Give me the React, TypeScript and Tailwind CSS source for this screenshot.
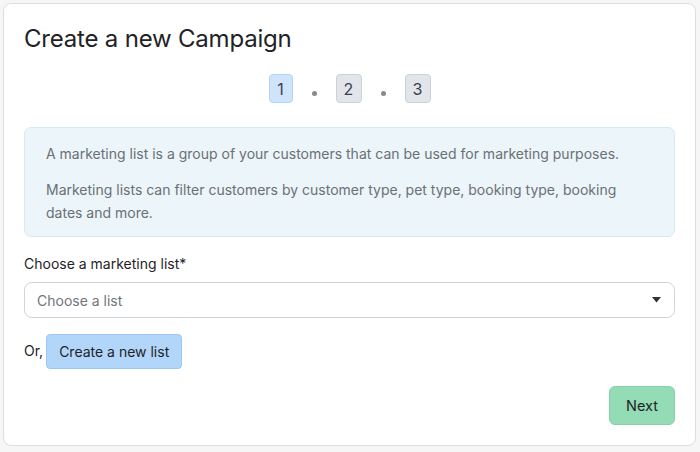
import React from "react";

export default function App() {
  return (
    <div
      className="min-h-[452px] w-[700px] bg-[#f6f6f6] p-[3px]"
      style={{ fontFamily: "Inter, 'Noto Sans', sans-serif" }}
    >
      <div className="flex h-[443px] w-[693px] flex-col rounded-[8px] border border-[#dedede] bg-white px-5 pt-[20px] pb-5">
        <h1 className="text-[24px] leading-[30px] font-normal text-[#1f2326] tracking-[-0.2px]">
          Create a new Campaign
        </h1>

        <div className="mt-[20px] flex items-center justify-center">
          <div className="flex h-[29px] w-[24px] items-center justify-center rounded-[4px] border border-[#b3d6f7] bg-[#cfe4fb] text-[16px] text-[#374151]">
            1
          </div>
          <span className="mx-[19px] mt-[9px] h-[5px] w-[5px] rounded-full bg-[#8a8a8a]" />
          <div className="flex h-[29px] w-[26px] items-center justify-center rounded-[4px] border border-[#cdd1d7] bg-[#e2e5e9] text-[16px] text-[#374151]">
            2
          </div>
          <span className="mx-[19px] mt-[9px] h-[5px] w-[5px] rounded-full bg-[#8a8a8a]" />
          <div className="flex h-[29px] w-[26px] items-center justify-center rounded-[4px] border border-[#cdd1d7] bg-[#e2e5e9] text-[16px] text-[#374151]">
            3
          </div>
        </div>

        <div className="mt-[24px] h-[110px] rounded-[7px] border border-[#d8eaf1] bg-[#ecf5f9] px-[21px] pt-[14px] text-[14px] leading-[23px] text-[#6b7075]">
          <p>A marketing list is a group of your customers that can be used for marketing purposes.</p>
          <p className="mt-[13px]">
            Marketing lists can filter customers by customer type, pet type, booking type, booking
            dates and more.
          </p>
        </div>

        <label className="mt-[16px] text-[14px] leading-[22px] text-[#1f2326]">
          Choose a marketing list*
        </label>

        <div className="mt-[7px] flex h-[36px] items-center justify-between rounded-[8px] border border-[#ced4da] bg-white pl-[12px] pr-[12px]">
          <span className="text-[14px] text-[#6f757b]">Choose a list</span>
          <svg width="9" height="6" viewBox="0 0 9 6" className="mr-[1px]">
            <path d="M0 0 L9 0 L4.5 5.5 Z" fill="#2f3336" />
          </svg>
        </div>

        <div className="mt-[16px] flex items-start gap-[3px]">
          <span className="mt-[7px] text-[14px] leading-[20px] text-[#1f2326]">Or,</span>
          <button className="h-[35px] rounded-[4px] border border-[#9cc9f4] bg-[#b1d6fa] px-[12px] text-[14px] text-[#1f2326]">
            Create a new list
          </button>
        </div>

        <div className="mt-auto flex justify-end">
          <button className="h-[39px] w-[66px] rounded-[6px] border border-[#85d1a8] bg-[#93dcb5] text-[14.5px] text-[#1f2326]">
            Next
          </button>
        </div>
      </div>
    </div>
  );
}
